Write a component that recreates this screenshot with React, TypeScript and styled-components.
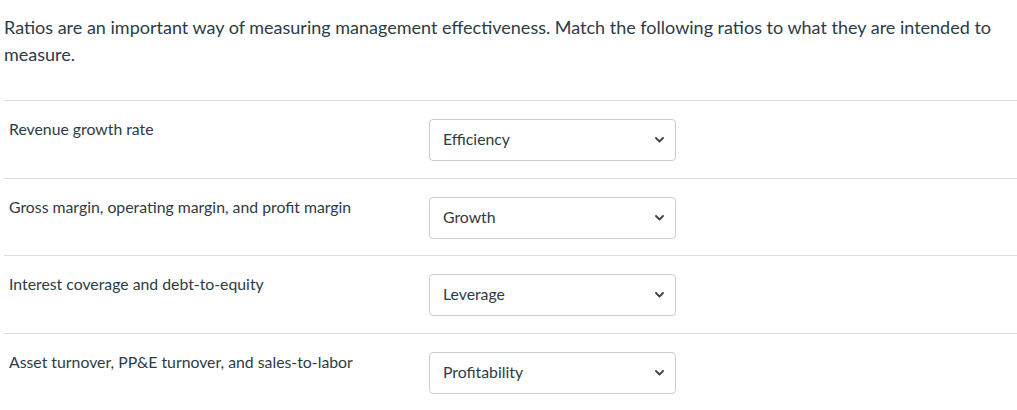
import React from "react";
import styled, { createGlobalStyle } from "styled-components";

const Global = createGlobalStyle`
  html, body { margin: 0; padding: 0; background: #ffffff; }
  body { font-family: Lato, "Liberation Sans", Arial, sans-serif; color: #2D3B45; }
`;

const Page = styled.div`
  padding: 14px 0 0 4px;
`;

const Question = styled.p`
  margin: 0 0 32px 0;
  font-size: 18px;
  line-height: 27px;
  color: #2D3B45;
  padding-right: 20px;
`;

const Row = styled.div`
  display: flex;
  align-items: flex-start;
  border-top: 1px solid #dcdfe1;
  height: 76.7px;
`;

const Label = styled.div`
  width: 420px;
  padding: 16px 0 0 5px;
  font-size: 15.8px;
  line-height: 24px;
  color: #2D3B45;
`;

const Select = styled.div`
  margin-top: 18px;
  box-sizing: border-box;
  width: 247px;
  height: 42px;
  border: 1px solid #c7cdd1;
  border-radius: 4px;
  background: #fff;
  display: flex;
  align-items: center;
  justify-content: space-between;
  padding: 0 11px 3px 13px;
  font-size: 15.8px;
  color: #2D3B45;
`;

const Chevron = () => (
  <svg width="9" height="6" viewBox="0 0 9 6" aria-hidden="true" style={{ marginTop: 3 }}>
    <path d="M1 1 L4.5 4.5 L8 1" fill="none" stroke="#3c474f" strokeWidth="1.9" strokeLinecap="round" strokeLinejoin="round" />
  </svg>
);

const rows = [
  { label: "Revenue growth rate", value: "Efficiency" },
  { label: "Gross margin, operating margin, and profit margin", value: "Growth" },
  { label: "Interest coverage and debt-to-equity", value: "Leverage" },
  { label: "Asset turnover, PP&E turnover, and sales-to-labor", value: "Profitability" },
];

export default function App() {
  return (
    <Page>
      <Global />
      <Question>
        Ratios are an important way of measuring management effectiveness. Match the following ratios to what they are intended to measure.
      </Question>
      {rows.map((r) => (
        <Row key={r.label}>
          <Label>{r.label}</Label>
          <Select>
            <span>{r.value}</span>
            <Chevron />
          </Select>
        </Row>
      ))}
    </Page>
  );
}
